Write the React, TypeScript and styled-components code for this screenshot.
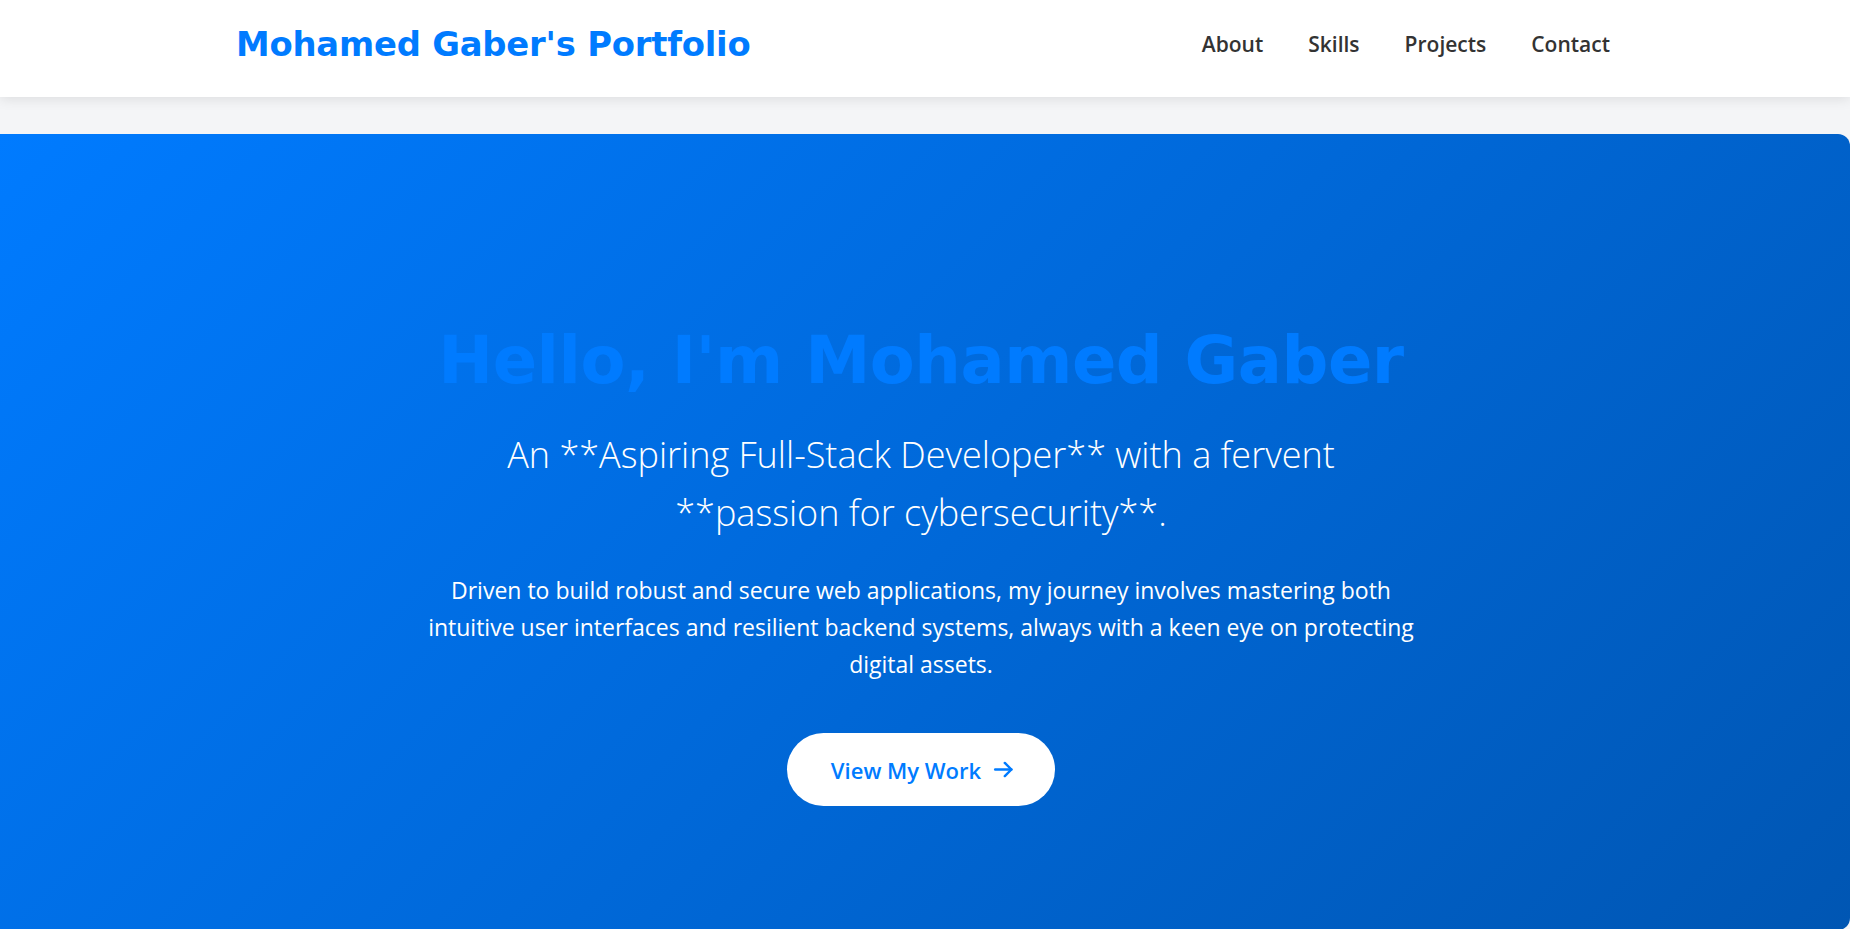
import React from "react";
import styled, { createGlobalStyle } from "styled-components";

const GlobalStyle = createGlobalStyle`
  * { box-sizing: border-box; }
  html, body { margin: 0; padding: 0; }
  body {
    background: #f4f5f7;
    font-family: "Open Sans", "Noto Sans", sans-serif;
    color: #333;
    overflow: hidden;
  }
`;

const Header = styled.header`
  background: #ffffff;
  height: 97px;
  box-shadow: 0 2px 12px rgba(0, 0, 0, 0.1);
  position: relative;
  z-index: 2;
`;

const HeaderInner = styled.div`
  max-width: 1374px;
  height: 100%;
  margin: 0 auto;
  display: flex;
  align-items: center;
  justify-content: space-between;
`;

const Logo = styled.a`
  font-family: "DejaVu Sans", "Open Sans", sans-serif;
  font-weight: 700;
  font-size: 33.8px;
  letter-spacing: -0.2px;
  color: #007bff;
  text-decoration: none;
  margin-left: -2px;
  margin-top: -9px;
`;

const Nav = styled.nav`
  display: flex;
  align-items: center;
  gap: 45px;
  margin-top: -9px;
  margin-right: 2px;
`;

const NavLink = styled.a`
  font-family: "Open Sans", sans-serif;
  font-weight: 600;
  font-size: 21px;
  color: #333;
  text-decoration: none;
`;

const Main = styled.main`
  padding-top: 37px;
`;

const Hero = styled.section`
  height: 796px;
  background: linear-gradient(135deg, #007bff 0%, #0056b3 100%);
  border-top-right-radius: 12px;
  border-bottom-right-radius: 12px;
  display: flex;
  flex-direction: column;
  align-items: center;
  text-align: center;
  padding: 183px 24px 0 16px;
  color: #ffffff;
`;

const Title = styled.h1`
  margin: 0;
  font-family: "DejaVu Sans", "Open Sans", sans-serif;
  font-weight: 700;
  font-size: 65.5px;
  line-height: 86px;
  letter-spacing: -0.5px;
  color: #007bff;
`;

const Subtitle = styled.p`
  margin: 23px 0 0;
  max-width: 880px;
  font-family: "Open Sans", sans-serif;
  font-weight: 300;
  font-size: 36px;
  line-height: 58px;
  color: #ffffff;
`;

const Description = styled.p`
  margin: 30px 0 0;
  max-width: 1000px;
  font-family: "Open Sans", sans-serif;
  font-weight: 400;
  font-size: 23px;
  line-height: 37px;
  color: #ffffff;
`;

const CtaButton = styled.a`
  margin-top: 50px;
  height: 73px;
  padding: 0 41px 0 44px;
  display: inline-flex;
  align-items: center;
  gap: 12px;
  background: #ffffff;
  border-radius: 40px;
  color: #007bff;
  font-family: "Open Sans", sans-serif;
  font-weight: 600;
  font-size: 22px;
  text-decoration: none;
`;

const Arrow = () => (
  <svg width="21" height="21" viewBox="0 0 24 24" fill="none" stroke="currentColor" strokeWidth="2.8" strokeLinecap="round" strokeLinejoin="round">
    <path d="M2.5 12h18.5" />
    <path d="M13.5 4.5 21 12l-7.5 7.5" />
  </svg>
);

export default function App() {
  return (
    <>
      <GlobalStyle />
      <Header>
        <HeaderInner>
          <Logo href="#">Mohamed Gaber's Portfolio</Logo>
          <Nav>
            <NavLink href="#about">About</NavLink>
            <NavLink href="#skills">Skills</NavLink>
            <NavLink href="#projects">Projects</NavLink>
            <NavLink href="#contact">Contact</NavLink>
          </Nav>
        </HeaderInner>
      </Header>
      <Main>
        <Hero>
          <Title>Hello, I'm Mohamed Gaber</Title>
          <Subtitle>
            An **Aspiring Full-Stack Developer** with a fervent **passion for cybersecurity**.
          </Subtitle>
          <Description>
            Driven to build robust and secure web applications, my journey involves mastering both intuitive user interfaces and resilient backend systems, always with a keen eye on protecting digital assets.
          </Description>
          <CtaButton href="#projects">
            View My Work
            <Arrow />
          </CtaButton>
        </Hero>
      </Main>
    </>
  );
}
